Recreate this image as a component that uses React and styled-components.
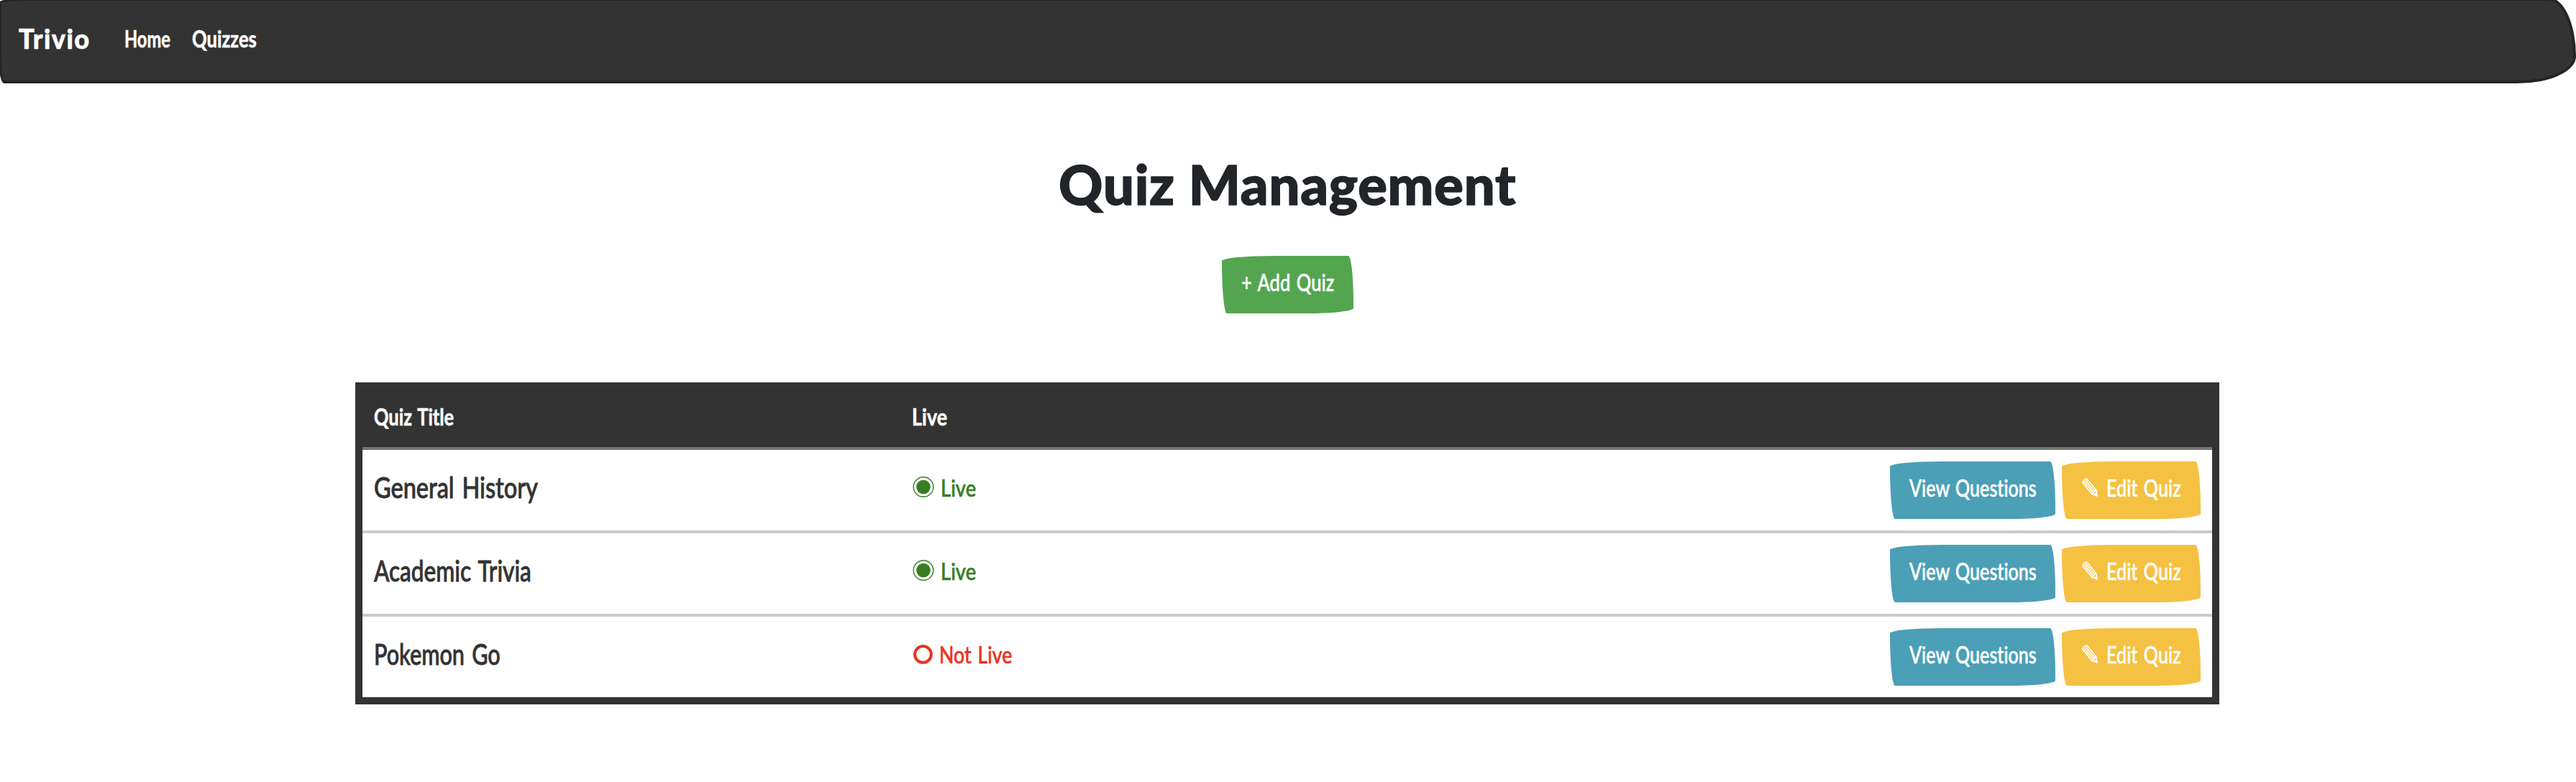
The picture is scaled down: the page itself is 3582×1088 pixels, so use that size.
import React, { useLayoutEffect, useRef, useState } from "react";
import styled, { createGlobalStyle } from "styled-components";

const GlobalStyle = createGlobalStyle`
  * { box-sizing: border-box; }
  body {
    margin: 0;
    background: #fff;
    color: #333;
    font-family: Lato, "Open Sans", sans-serif;
    overflow: hidden;
  }
`;

/* Text condensed horizontally to a given width, for a narrow hand-lettered look. */
const FitBox = styled.span`
  display: inline-block;
  flex: none;
  width: ${(p) => p.$width}px;
  font-size: ${(p) => p.$size}px;
  font-weight: ${(p) => p.$weight};
  line-height: 1.2;
  letter-spacing: ${(p) => p.$tracking}em;
  word-spacing: ${(p) => (p.$tracking ? 0 : 0.08)}em;
  -webkit-text-stroke: ${(p) => p.$stroke}px currentColor;
  font-variant-ligatures: none;
  white-space: nowrap;
  text-align: left;
`;
const FitInner = styled.span`
  display: inline-block;
  transform-origin: 0 50%;
`;

function Lettering({ width, size = 32.5, weight = 500, tracking = 0, stroke = 0.6, children }) {
  const ref = useRef(null);
  const [scale, setScale] = useState(1);
  useLayoutEffect(() => {
    setScale(width / ref.current.offsetWidth);
  }, [width, size, weight, tracking, children]);
  return (
    <FitBox $width={width} $size={size} $weight={weight} $tracking={tracking} $stroke={stroke}>
      <FitInner ref={ref} style={{ transform: `scaleX(${scale})` }}>
        {children}
      </FitInner>
    </FitBox>
  );
}

const Navbar = styled.nav`
  display: flex;
  align-items: center;
  width: 3584px;
  height: 119px;
  margin: -3px 0 0 -2px;
  padding: 0 24px 6px;
  color: #fff;
  background: #333;
  border: 4px solid #212529;
  border-radius: 50px 50px 110px 10px / 10px 110px 50px 50px;
`;
const Brand = styled.a`
  display: flex;
  margin-right: 47px;
`;
const NavLinks = styled.div`
  display: flex;
  gap: 30px;
`;

const Page = styled.main`
  display: flex;
  flex-direction: column;
  align-items: center;
`;
const Title = styled.h1`
  display: flex;
  margin: 94px 0 0;
  padding-right: 2px;
  color: #212529;
`;
const Button = styled.a`
  display: flex;
  align-items: center;
  justify-content: center;
  gap: 12px;
  width: ${(p) => p.$width}px;
  height: 80px;
  padding-bottom: 8px;
  color: #fff;
  background: ${(p) => p.$color};
  border-radius: 510px 50px 450px 50px / 50px 450px 50px 510px;
`;
const AddRow = styled.div`
  display: flex;
  margin: 55px 2px 96px 0;
`;

const Table = styled.section`
  width: 2592px;
  margin-right: 2px;
  border: 10px solid #333;
`;
const Row = styled.div`
  display: grid;
  grid-template-columns: 748px 1fr auto;
  align-items: center;
  height: ${(p) => (p.$last ? 112 : 116)}px;
  padding: 0 16px;
  border-bottom: ${(p) => (p.$last ? "none" : "4px solid #cbcbcb")};
`;
const HeadRow = styled(Row)`
  height: 84px;
  padding-bottom: 6px;
  color: #fff;
  background: #333;
  border-bottom: 4px solid #757575;
`;
const TitleCell = styled.div`
  display: flex;
  padding-bottom: 9px;
`;
const Status = styled.div`
  display: flex;
  align-items: center;
  gap: 9px;
  padding: 0 0 8px ${(p) => (p.$live ? 1 : 2)}px;
  color: ${(p) => (p.$live ? "#377e22" : "#ea3323")};
`;
const Actions = styled.div`
  display: flex;
  gap: 9px;
`;

const LiveIcon = () => (
  <svg width="30" height="30" viewBox="0 0 30 30" fill="none">
    <circle cx="15" cy="14.5" r="13.8" stroke="currentColor" strokeWidth="1.4" />
    <circle cx="15" cy="14.5" r="9.8" fill="currentColor" />
  </svg>
);
const OffIcon = () => (
  <svg width="27" height="28" viewBox="0 0 27 28" fill="none">
    <circle cx="13.5" cy="14.4" r="11.4" stroke="currentColor" strokeWidth="4" />
  </svg>
);
const Pencil = () => (
  <svg width="22" height="26" viewBox="0 0 22 26" fill="none" stroke="currentColor" strokeWidth="1.7" strokeLinejoin="round">
    <path d="M1 6.5C1.5 3.5 4 1.2 7 1.2L19.7 16.7L21 24.8L13.8 22.1Z" />
    <path d="M3 4.9L15.9 20.7M5 3L17.8 18.8M13.8 22.1C14 20.8 14.8 20.3 15.9 20.7C16 19.3 16.7 18.8 17.8 18.8C17.8 17.7 18.6 16.8 19.7 16.7" />
    <path d="M16.3 23L20.4 21.2L21 24.8Z" fill="currentColor" />
  </svg>
);

const quizzes = [
  { name: "General History", width: 228, live: true },
  { name: "Academic Trivia", width: 219, live: true },
  { name: "Pokemon Go", width: 176, live: false },
];

export default function App() {
  return (
    <>
      <GlobalStyle />
      <Navbar>
        <Brand>
          <Lettering width={100} size={38} weight={900} tracking={0.04}>Trivio</Lettering>
        </Brand>
        <NavLinks>
          <Lettering width={64} weight={700}>Home</Lettering>
          <Lettering width={90} weight={700}>Quizzes</Lettering>
        </NavLinks>
      </Navbar>
      <Page>
        <Title>
          <Lettering width={636} size={76} weight={900} tracking={0.01} stroke={1.4}>Quiz Management</Lettering>
        </Title>
        <AddRow>
          <Button $width={183} $color="#53a550">
            <Lettering width={129}>+ Add Quiz</Lettering>
          </Button>
        </AddRow>
        <Table>
          <HeadRow>
            <Lettering width={111} weight={700}>Quiz Title</Lettering>
            <Lettering width={49} weight={700}>Live</Lettering>
          </HeadRow>
          {quizzes.map((quiz, i) => (
            <Row key={quiz.name} $last={i === quizzes.length - 1}>
              <TitleCell>
                <Lettering width={quiz.width} size={41} stroke={0.9}>{quiz.name}</Lettering>
              </TitleCell>
              <Status $live={quiz.live}>
                {quiz.live ? <LiveIcon /> : <OffIcon />}
                <Lettering width={quiz.live ? 49 : 101}>
                  {quiz.live ? "Live" : "Not Live"}
                </Lettering>
              </Status>
              <Actions>
                <Button $width={230} $color="#4b9fb6">
                  <Lettering width={177}>View Questions</Lettering>
                </Button>
                <Button $width={193} $color="#f5c142">
                  <Pencil />
                  <Lettering width={104}>Edit Quiz</Lettering>
                </Button>
              </Actions>
            </Row>
          ))}
        </Table>
      </Page>
    </>
  );
}
